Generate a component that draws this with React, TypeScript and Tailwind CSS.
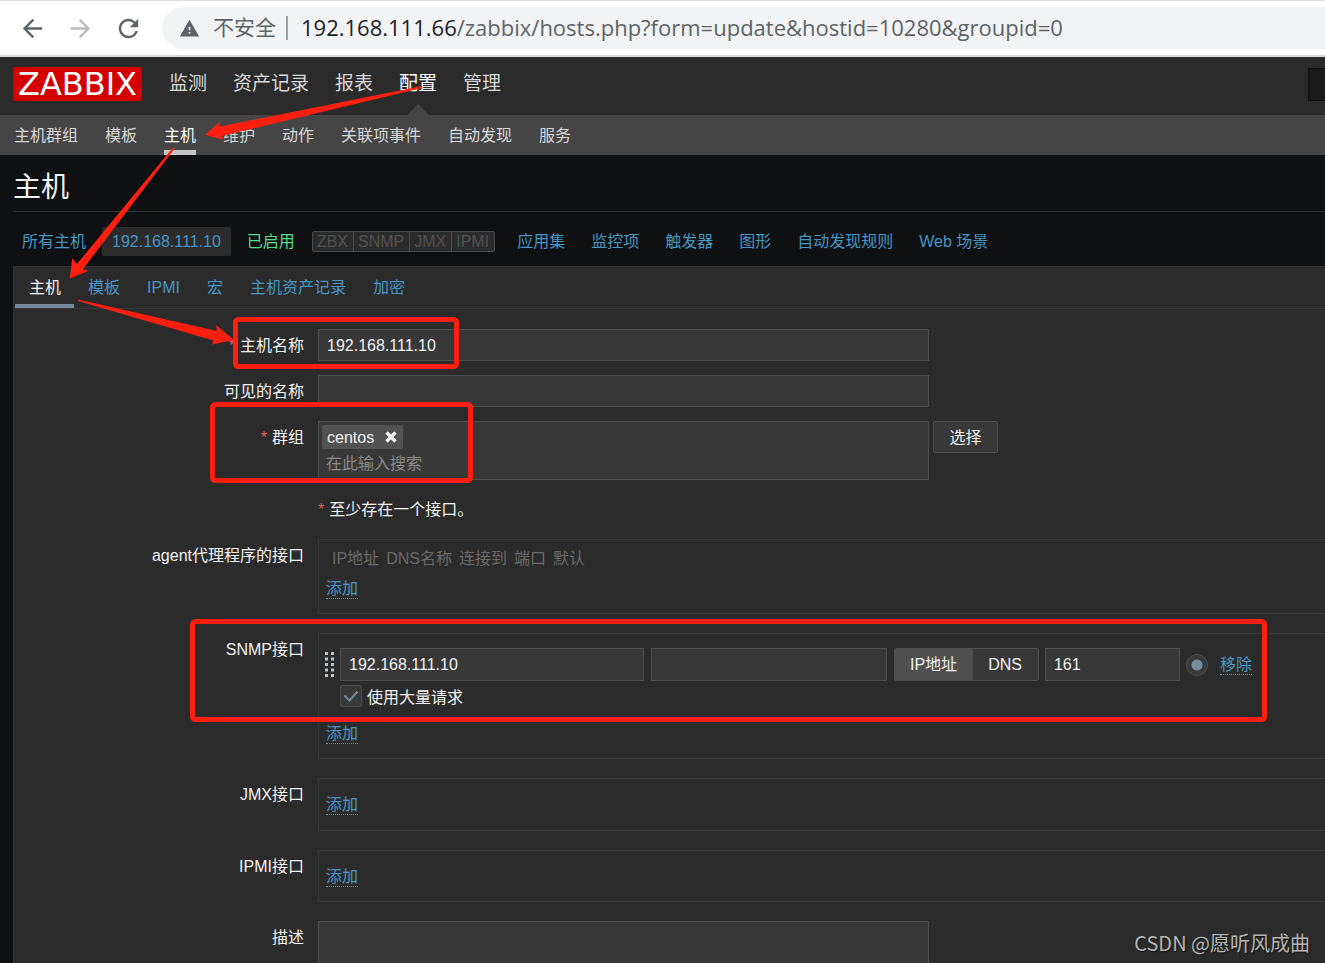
import { useState } from 'react';
import type { ReactNode } from 'react';
import { MdArrowBack, MdArrowForward, MdRefresh, MdWarning } from 'react-icons/md';

const MAIN_MENU = ['监测', '资产记录', '报表', '配置', '管理'];
const SUB_MENU = ['主机群组', '模板', '主机', '维护', '动作', '关联项事件', '自动发现', '服务'];
const AVAILABILITY = ['ZBX', 'SNMP', 'JMX', 'IPMI'];
const HOST_LINKS = ['应用集', '监控项', '触发器', '图形', '自动发现规则', 'Web 场景'];
const TABS = ['主机', '模板', 'IPMI', '宏', '主机资产记录', '加密'];
const INTERFACE_COLUMNS = ['IP地址', 'DNS名称', '连接到', '端口', '默认'];

const inputClass = 'border border-[#4f4f4f] bg-[#383838] px-2 text-[#f2f2f2] outline-none';

function BrowserBar() {
  return (
    <div className="flex h-[57px] shrink-0 items-center border-t border-b-2 border-t-[#dee1e6] border-b-[#dadada] bg-white">
      <div className="flex w-[162px] shrink-0 items-center gap-[19px] pl-[18px] text-[#5f6368]">
        <button type="button" aria-label="后退"><MdArrowBack size={29} /></button>
        <button type="button" aria-label="前进" className="text-[#babcbe]"><MdArrowForward size={29} /></button>
        <button type="button" aria-label="刷新"><MdRefresh size={29} /></button>
      </div>
      <div className="flex h-[42px] min-w-0 flex-1 items-center rounded-l-full bg-[#f1f3f4] pl-[17px] font-['Open_Sans','Noto_Sans_CJK_SC',sans-serif] whitespace-nowrap text-[#5f6368]">
        <MdWarning size={21} className="shrink-0" />
        <span className="ml-[13px] text-[21px]">不安全</span>
        <span className="ml-[10px] h-6 w-[2px] bg-[#9aa0a6]" />
        <span className="ml-[13px] pb-0.5 text-[22px]">
          <span className="text-[#202124]">192.168.111.66</span>/zabbix/hosts.php?form=update&amp;hostid=10280&amp;groupid=0
        </span>
      </div>
    </div>
  );
}

function Header() {
  return (
    <header className="shrink-0">
      <div className="flex h-[58px] items-stretch bg-[#2b2b2b] pl-[13px]">
        <a href="#" className="mt-[10px] flex h-[34px] w-[129px] shrink-0 items-center justify-center bg-[#d40000] font-['DejaVu_Sans',sans-serif] text-[32px] leading-[34px] text-white">
          ZABBIX
        </a>
        <nav className="ml-[27px] flex gap-[26px] text-[19px] leading-[54px]">
          {MAIN_MENU.map((item) => (
            <a key={item} href="#" className={item === '配置' ? 'relative text-white' : 'text-[#d8d8d8]'}>
              {item}
              {item === '配置' && (
                <svg width="22" height="11" viewBox="0 0 22 11" className="absolute bottom-0 left-1/2 -translate-x-1/2" fill="#454545">
                  <path d="M11 0 22 11H0z" />
                </svg>
              )}
            </a>
          ))}
        </nav>
        <input type="text" aria-label="搜索" className="mt-[11px] ml-auto h-[33px] w-[17px] border border-r-0 border-[#111111] bg-[#1a1a1a]" />
      </div>
      <nav className="flex h-10 gap-[27px] bg-[#454545] pl-[14px] text-base leading-[42px]">
        {SUB_MENU.map((item) => (
          <a
            key={item}
            href="#"
            className={item === '主机' ? 'border-b-[5px] border-[#c4c4c4] text-white' : 'text-[#d8d8d8]'}
          >
            {item}
          </a>
        ))}
      </nav>
    </header>
  );
}

function HostBar() {
  return (
    <div className="flex h-[54px] shrink-0 items-center gap-4 pt-[5px] pl-[22px] whitespace-nowrap text-[#4796c4]">
      <a href="#">所有主机</a>
      <a href="#" className="rounded-[2px] bg-[#2b2b2b] px-[10px] leading-[29px]">192.168.111.10</a>
      <span className="text-[#59db8f]">已启用</span>
      <div className="ml-px flex rounded-[2px] border border-[#4a4a4a] bg-[#2b2b2b] leading-[19px] text-[#525252]">
        {AVAILABILITY.map((item) => (
          <span key={item} className="border-r border-[#4a4a4a] pr-[5px] pl-1 last:border-r-0">{item}</span>
        ))}
      </div>
      <div className="ml-[6px] flex gap-[26px]">
        {HOST_LINKS.map((item) => (
          <a key={item} href="#">{item}</a>
        ))}
      </div>
    </div>
  );
}

interface RowProps {
  label?: string;
  htmlFor?: string;
  required?: boolean;
  children: ReactNode;
}

function Row({ label, htmlFor, required, children }: RowProps) {
  return (
    <div className="grid grid-cols-[290px_1fr] gap-[14px]">
      <label htmlFor={htmlFor} className="pt-0.5 text-right leading-[30px]">
        {required && <span className="mr-[5px] text-[#e45959]">*</span>}
        {label}
      </label>
      <div className="flex min-w-0 items-start">{children}</div>
    </div>
  );
}

function DottedLink({ children }: { children: ReactNode }) {
  return (
    <a href="#" className="inline-block border-b border-dotted border-[#4796c4] leading-[18px] text-[#4796c4]">
      {children}
    </a>
  );
}

function InterfaceBox({ children }: { children: ReactNode }) {
  return (
    <div className="mb-[5px] flex flex-1 flex-col items-start border border-r-0 border-[#383838] pl-[7px]">
      {children}
    </div>
  );
}

function DragHandle() {
  return (
    <svg width="10" height="26" viewBox="0 0 10 26" fill="#b9c2c7" className="mr-[5px] shrink-0">
      {[0, 5.5, 11, 16.5, 22].map((y) => (
        <path key={y} d={`M0 ${y}h3v3H0zM6 ${y}h3v3H6z`} />
      ))}
    </svg>
  );
}

function SnmpInterface() {
  const [bulk, setBulk] = useState(true);
  const [connectTo, setConnectTo] = useState('IP地址');

  return (
    <div className="-ml-px pt-[14px]">
      <div className="flex items-center whitespace-nowrap">
        <DragHandle />
        <input type="text" id="snmp-ip" defaultValue="192.168.111.10" className={`h-[33px] w-[304px] ${inputClass}`} />
        <input type="text" aria-label="DNS名称" className={`ml-[7px] h-[33px] w-[236px] ${inputClass}`} />
        <div className="ml-[7px] flex h-[33px] overflow-hidden rounded-[2px] border border-[#4f4f4f]">
          {['IP地址', 'DNS'].map((type) => (
            <button
              key={type}
              type="button"
              onClick={() => setConnectTo(type)}
              className={connectTo === type ? 'bg-[#4f4f4f] pr-4 pl-[15px]' : 'bg-[#383838] pr-4 pl-[15px]'}
            >
              {type}
            </button>
          ))}
        </div>
        <input type="text" aria-label="端口" defaultValue="161" className={`ml-[6px] h-[33px] w-[135px] ${inputClass}`} />
        <input
          type="radio"
          aria-label="默认"
          defaultChecked
          className="ml-[6px] size-[22px] appearance-none rounded-full border border-[#4f4f4f] bg-[#383838] checked:bg-[radial-gradient(circle,#768d99_5px,transparent_6px)]"
        />
        <span className="ml-3"><DottedLink>移除</DottedLink></span>
      </div>
      <label className="mt-1 ml-[15px] flex h-[22px] w-fit items-center gap-[5px]">
        <span className="grid">
          <input
            type="checkbox"
            checked={bulk}
            onChange={(e) => setBulk(e.target.checked)}
            className="col-start-1 row-start-1 size-[22px] appearance-none rounded-[2px] border border-[#4f4f4f] bg-[#383838]"
          />
          {bulk && (
            <svg width="22" height="22" viewBox="0 0 22 22" fill="none" stroke="#768d99" strokeWidth="2" className="pointer-events-none col-start-1 row-start-1">
              <path d="M4.5 10.5 9.5 15.5 17.5 6.5" />
            </svg>
          )}
        </span>
        <span className="pt-[3px]">使用大量请求</span>
      </label>
    </div>
  );
}

function HostForm() {
  return (
    <form className="mt-5 flex flex-col gap-[14px]">
      <Row label="主机名称" htmlFor="host" required>
        <input type="text" id="host" defaultValue="192.168.111.10" className={`h-8 w-[611px] pt-0.5 ${inputClass}`} />
      </Row>
      <Row label="可见的名称" htmlFor="visible-name">
        <input type="text" id="visible-name" className={`h-8 w-[611px] pt-0.5 ${inputClass}`} />
      </Row>
      <Row label="群组" htmlFor="groups" required>
        <div className="flex w-[611px] flex-col items-start border border-[#4f4f4f] bg-[#383838] p-[3px]">
          <span className="flex h-6 items-center gap-[11px] rounded-[2px] bg-[#525252] pr-[6px] pl-[5px]">
            <span className="pt-0.5">centos</span>
            <button type="button" aria-label="移除 centos">
              <svg width="12" height="12" viewBox="0 0 12 12" stroke="#f2f2f2" strokeWidth="3.4">
                <path d="M1.5 1.5 10.5 10.5M10.5 1.5 1.5 10.5" />
              </svg>
            </button>
          </span>
          <input
            type="text"
            id="groups"
            placeholder="在此输入搜索"
            className="h-[27px] w-full pt-0.5 pl-1 outline-none placeholder:text-[#8a8a8a]"
          />
        </div>
        <button type="button" className="ml-1 h-8 w-[65px] rounded-[2px] border border-[#4f4f4f] bg-[#383838] pt-0.5">选择</button>
      </Row>
      <Row>
        <p className="h-[31px] leading-8"><span className="mr-[5px] text-[#e45959]">*</span>至少存在一个接口。</p>
      </Row>
      <Row label="agent代理程序的接口">
        <InterfaceBox>
          <table className="mt-[7px] ml-[6px] text-[#6a6a6a]">
            <thead>
              <tr>
                {INTERFACE_COLUMNS.map((column) => (
                  <th key={column} className="pr-[7px] text-left leading-6 font-normal">{column}</th>
                ))}
              </tr>
            </thead>
          </table>
          <div className="flex pt-[9px] pb-[14px]"><DottedLink>添加</DottedLink></div>
        </InterfaceBox>
      </Row>
      <Row label="SNMP接口" htmlFor="snmp-ip">
        <InterfaceBox>
          <SnmpInterface />
          <div className="flex pt-[18px] pb-[14px]"><DottedLink>添加</DottedLink></div>
        </InterfaceBox>
      </Row>
      <Row label="JMX接口">
        <InterfaceBox>
          <div className="flex pt-[17px] pb-[15px]"><DottedLink>添加</DottedLink></div>
        </InterfaceBox>
      </Row>
      <Row label="IPMI接口">
        <InterfaceBox>
          <div className="flex pt-[17px] pb-[14px]"><DottedLink>添加</DottedLink></div>
        </InterfaceBox>
      </Row>
      <Row label="描述" htmlFor="description">
        <textarea id="description" rows={5} className={`w-[611px] resize-none ${inputClass}`} />
      </Row>
    </form>
  );
}

// Red frames and arrows drawn over the page
function Annotations() {
  return (
    <svg width="1325" height="963" viewBox="0 0 1325 963" className="pointer-events-none absolute top-0 left-0">
      <g fill="none" stroke="#ff1f11" strokeWidth="5">
        <rect x="235.5" y="319.5" width="221" height="47" rx="3" />
        <rect x="212.5" y="404.5" width="258" height="76" rx="3" />
        <rect x="192.5" y="621.5" width="1072" height="98" rx="3" />
      </g>
      <g fill="#ff1f11">
        <path d="M422 86 219 126.700 220.500 121 205.500 134.800 223 140 221.500 136 422 88z" />
        <path d="M173 147.500 77 264 72.300 258 69.800 278.500 88.500 270.700 82.700 269.500 175 148z" />
        <path d="M78 299.500 217 331 216 325 234 340 212 344.500 213.500 340.500 78 301z" />
      </g>
    </svg>
  );
}

export default function App() {
  const [tab, setTab] = useState('主机');

  return (
    <div className="relative flex h-screen flex-col overflow-hidden bg-[#0e1012] font-['Liberation_Sans','Noto_Sans_CJK_SC',sans-serif] text-base text-[#f2f2f2]">
      <BrowserBar />
      <Header />
      <div className="ml-[13px] flex h-[57px] shrink-0 items-center border-b border-[#2f3133] pt-[10px]">
        <h1 className="text-[28px] leading-9">主机</h1>
      </div>
      <HostBar />
      <main className="ml-[13px] flex-1 overflow-hidden border-t border-l border-[#303030] bg-[#2b2b2b]">
        <div className="flex h-[42px] items-start border-b border-[#383838] pl-px">
          {TABS.map((item) => (
            <button
              key={item}
              type="button"
              onClick={() => setTab(item)}
              className={
                item === tab
                  ? 'h-[41px] border-b-4 border-[#768d99] pt-1 pr-[13px] pl-[14px] text-[#f2f2f2]'
                  : 'h-[41px] border-b-4 border-transparent pt-1 pr-[13px] pl-[14px] text-[#4796c4]'
              }
            >
              {item}
            </button>
          ))}
        </div>
        <HostForm />
      </main>
      <Annotations />
      <div className="absolute right-[15px] bottom-[6px] font-['Noto_Sans_CJK_SC',sans-serif] text-[20px] leading-7 text-[#b5b5b5] [text-shadow:1px_1px_1px_#111]">
        CSDN @愿听风成曲
      </div>
    </div>
  );
}
